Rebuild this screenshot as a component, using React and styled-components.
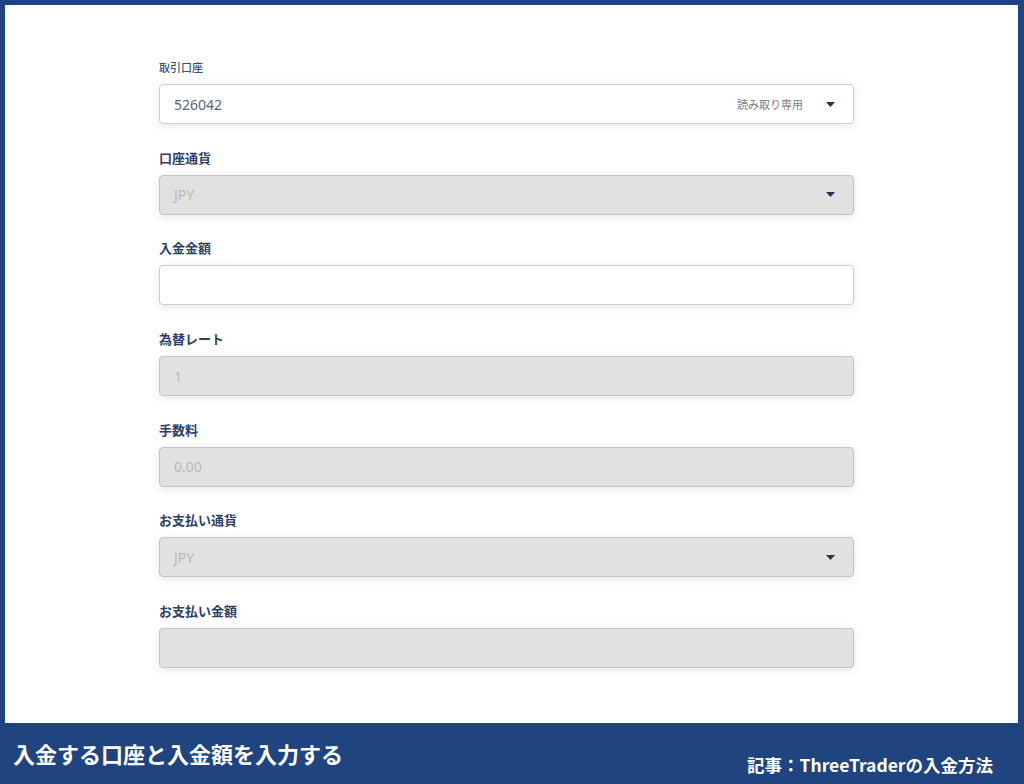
import React from "react";
import styled, { createGlobalStyle } from "styled-components";

const GlobalStyle = createGlobalStyle`
  html, body {
    margin: 0;
    padding: 0;
    background: #1f4480;
  }
  body {
    font-family: "Noto Sans", "Noto Sans CJK JP", sans-serif;
  }
`;

const Frame = styled.div`
  width: 1024px;
  height: 784px;
  background: #1f4480;
  display: flex;
  flex-direction: column;
  padding: 5px 6px 0 5px;
  box-sizing: border-box;
`;

const Panel = styled.div`
  height: 718px;
  background: #ffffff;
  padding: 53px 0 0 154px;
  box-sizing: border-box;
`;

const Form = styled.div`
  width: 695px;
  display: flex;
  flex-direction: column;
  gap: 24.7px;
`;

const Field = styled.div`
  display: flex;
  flex-direction: column;
`;

const Label = styled.div`
  height: 18px;
  line-height: 18px;
  margin-bottom: 8px;
  font-family: "Noto Sans CJK JP", sans-serif;
  font-size: ${(p) => (p.small ? "11px" : "13px")};
  font-weight: ${(p) => (p.small ? 500 : 700)};
  color: ${(p) => (p.small ? "#3b4f76" : "#2b3f68")};
`;

const Box = styled.div`
  height: 40px;
  box-sizing: border-box;
  border: 1px solid ${(p) => (p.disabled ? "#c4c4c4" : "#cdcdcd")};
  border-radius: 4px;
  background: ${(p) => (p.disabled ? "#e1e1e1" : "#ffffff")};
  box-shadow: 0 2px 10px rgba(0, 0, 0, 0.1);
  display: flex;
  align-items: center;
  padding: 0 18px 0 14px;
`;

const Value = styled.span`
  flex: 1;
  font-family: "Noto Sans", sans-serif;
  font-size: 14px;
  color: ${(p) => (p.disabled ? "#b8b8b8" : "#56657f")};
`;

const Hint = styled.span`
  font-family: "Noto Sans CJK JP", sans-serif;
  font-size: 11px;
  color: #7b7b7b;
  margin-right: 23px;
`;

const Caret = styled.svg`
  width: 9px;
  height: 5px;
  display: block;
`;

const Bottom = styled.div`
  flex: 1;
  display: flex;
  justify-content: space-between;
  align-items: flex-start;
  padding: 0 25px 0 8px;
`;

const Title = styled.div`
  margin-top: 17px;
  font-family: "Noto Sans CJK JP", sans-serif;
  font-size: 22px;
  line-height: 26px;
  font-weight: 700;
  color: #ffffff;
`;

const Article = styled.div`
  margin-top: 31px;
  font-family: "Noto Sans CJK JP", sans-serif;
  font-size: 17.5px;
  line-height: 22px;
  font-weight: 700;
  color: #ffffff;
`;

const fields = [
  { label: "取引口座", value: "526042", hint: "読み取り専用", caret: true, small: true },
  { label: "口座通貨", value: "JPY", caret: true, disabled: true },
  { label: "入金金額", value: "" },
  { label: "為替レート", value: "1", disabled: true },
  { label: "手数料", value: "0.00", disabled: true },
  { label: "お支払い通貨", value: "JPY", caret: true, disabled: true },
  { label: "お支払い金額", value: "", disabled: true },
];

const App = () => {
  return (
    <>
      <GlobalStyle />
      <Frame>
        <Panel>
          <Form>
            {fields.map((f) => (
              <Field key={f.label}>
                <Label small={f.small}>{f.label}</Label>
                <Box disabled={f.disabled}>
                  <Value disabled={f.disabled}>{f.value}</Value>
                  {f.hint && <Hint>{f.hint}</Hint>}
                  {f.caret && (
                    <Caret viewBox="0 0 9 5">
                      <path d="M0 0 L9 0 L4.5 5 Z" fill="#1f3358" />
                    </Caret>
                  )}
                </Box>
              </Field>
            ))}
          </Form>
        </Panel>
        <Bottom>
          <Title>入金する口座と入金額を入力する</Title>
          <Article>記事：ThreeTraderの入金方法</Article>
        </Bottom>
      </Frame>
    </>
  );
};

export default App;
